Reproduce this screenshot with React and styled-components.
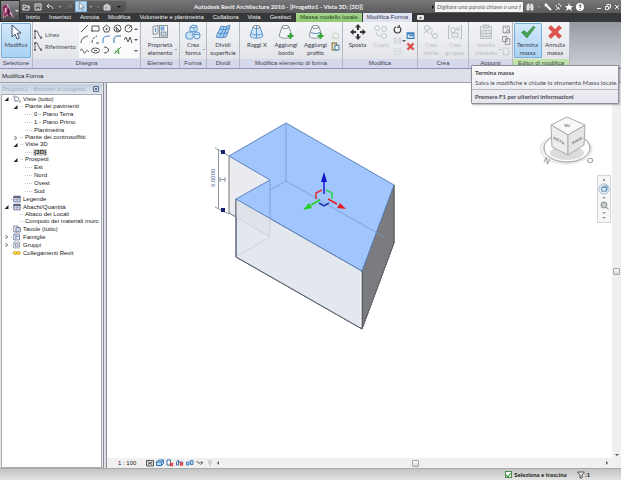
import React from "react";
import styled, { createGlobalStyle, css } from "styled-components";

const GlobalStyle = createGlobalStyle`
  * { box-sizing: border-box; }
  body {
    margin: 0;
    font-family: "Liberation Sans", Arial, sans-serif;
    font-size: 6px;
    line-height: 8px;
    color: #222;
  }
  button, input { font: inherit; color: inherit; margin: 0; padding: 0; border: 0; background: none; }
  svg { display: block; flex: none; }
`;

const Window = styled.div`
  display: flex;
  flex-direction: column;
  min-height: 100vh;
  background: #dcdfe8;
`;

/* ---------- header ---------- */
const Header = styled.header`
  display: flex;
  background: linear-gradient(#77777a, #5b5b5e 13px, #353638 13px, #38393c);
`;
const AppButton = styled.button`
  flex: none;
  display: flex;
  align-items: center;
  width: 20px;
  height: 22px;
  padding: 1px;
  gap: 1px;
  background: linear-gradient(#8d8d90, #444447);
  border: 1px solid #2c2c2e;
`;
const HeaderRows = styled.div`
  flex: 1;
  min-width: 0;
`;
const TitleBar = styled.div`
  display: flex;
  align-items: center;
  height: 13px;
`;
const QuickAccess = styled.div`
  display: flex;
  align-items: center;
  height: 11px;
  width: 106px;
  background: linear-gradient(#606063, #4a4a4d);
  border-radius: 0 0 6px 0;
`;
const QuickButton = styled.button`
  flex: none;
  display: flex;
  align-items: center;
  justify-content: center;
  width: ${(p) => (p.$narrow ? 7 : 12)}px;
  height: 11px;
  ${(p) =>
    p.$active &&
    css`
      background: #b9dcf7;
      border: 1px solid #7fb4de;
    `}
`;
const WindowTitle = styled.h1`
  flex: 1;
  margin: 0;
  font-family: Lato, sans-serif;
  font-size: 6px;
  font-weight: 700;
  color: #f2f2f2;
  text-align: center;
  white-space: nowrap;
`;
const SearchBox = styled.input`
  width: 88px;
  height: 10px;
  padding: 0 2px;
  background: #f4f4f4;
  font-family: Lato, sans-serif;
  font-style: italic;
  &::placeholder { color: #666; opacity: 1; }
`;
const TitleTools = styled.div`
  display: flex;
  align-items: center;
  justify-content: space-between;
  width: ${(p) => p.$width}px;
  margin: 0 1px 0 ${(p) => p.$gap}px;
`;
const Tabs = styled.nav`
  display: flex;
  align-items: stretch;
  gap: 1px;
  height: 9px;
  padding-left: 2px;
`;
const Tab = styled.button`
  padding: 0 4px;
  line-height: 9px;
  white-space: nowrap;
  color: #f0f0f0;
  ${(p) =>
    p.$tone === "green" &&
    css`
      background: linear-gradient(#a6d58d, #8fc876);
      color: #1d3a15;
    `}
  ${(p) =>
    p.$tone === "active" &&
    css`
      background: #dfe2f0;
      color: #333a55;
    `}
`;

/* ---------- ribbon ---------- */
const Ribbon = styled.section`
  display: flex;
  height: 47px;
  background: linear-gradient(#9698a2, #cdd0d9);
  border-bottom: 1px solid #8f92b5;
`;
const Group = styled.div`
  flex: 0 0 ${(p) => p.$width}px;
  min-width: 0;
  display: flex;
  flex-direction: column;
  background: linear-gradient(#f3f4f6, #dfe1e6);
  border-right: 1px solid #b6b9c4;
`;
const GroupBody = styled.div`
  flex: 1;
  display: flex;
  justify-content: center;
  gap: ${(p) => p.$gap || 0}px;
  padding: 1px 0;
`;
const GroupLabel = styled.div`
  height: 9px;
  text-align: center;
  white-space: nowrap;
  color: #3e4250;
  background: ${(p) => (p.$green ? "#bfe3a9" : "#d6d9ec")};
`;
const BigButton = styled.button`
  position: relative;
  flex: none;
  display: flex;
  flex-direction: column;
  align-items: center;
  gap: 1px;
  width: ${(p) => p.$width || 30}px;
  height: 35px;
  white-space: nowrap;
  color: #3c404a;
  border: 1px solid transparent;
  ${(p) =>
    p.$active &&
    css`
      background: linear-gradient(#d3e8fa, #a9d2f3);
      border-color: #78aeda;
      border-radius: 1px;
    `}
  &:disabled { color: #b4b6bb; opacity: 0.8; }
`;
const ButtonText = styled.span`
  line-height: 8px;
  font-family: Lato, sans-serif;
`;
const Drop = styled.i`
  position: absolute;
  right: 0;
  bottom: 7px;
  border: 1px solid transparent;
  border-top-color: #555;
  border-bottom: 0;
`;
const Stack = styled.div`
  display: flex;
  flex-direction: column;
  justify-content: center;
  gap: 2px;
`;
const LineButton = styled.button`
  display: flex;
  align-items: center;
  gap: 2px;
  height: 10px;
  white-space: nowrap;
  font-family: Lato, sans-serif;
  color: #4a4e57;
`;
const Gallery = styled.div`
  display: grid;
  grid-template-columns: repeat(5, 11px) 5px;
  grid-template-rows: repeat(3, 11px);
  place-items: center;
  background: #fbfbfc;
`;

/* ---------- options bar and body ---------- */
const OptionsBar = styled.div`
  height: 14px;
  padding: 3px 2px;
  border-bottom: 1px solid #9fa1a8;
`;
const Body = styled.main`
  flex: 1;
  display: flex;
  min-height: 0;
`;
const Browser = styled.aside`
  flex: 0 0 104px;
  display: flex;
  flex-direction: column;
  padding: 1px 1px 0 1px;
  border-right: 1px solid #8c8e93;
  background: #e4e5e9;
`;
const BrowserTitle = styled.div`
  display: flex;
  justify-content: space-between;
  align-items: center;
  height: 10px;
  padding: 0 3px 0 1px;
  color: #a3b0c2;
  background: linear-gradient(#c3cfdf, #dfe6ef);
`;
const Tree = styled.ul`
  flex: 1;
  margin: 0;
  padding: 0;
  list-style: none;
  background: #fff;
  border: 1px solid #a8acb3;
`;
const TreeRow = styled.li`
  display: flex;
  align-items: center;
  height: ${(p) => (p.$level === 1 ? 7 : 8)}px;
  padding-left: ${(p) => [2, 11, 23][p.$level]}px;
  gap: 1px;
  white-space: nowrap;
`;
const Toggle = styled.button`
  width: 6px;
  height: 6px;
`;
const Twig = styled.span`
  width: ${(p) => p.$width}px;
  border-top: 1px dotted #c4c4c4;
`;
const TreeLabel = styled.span`
  padding: 0 1px;
  line-height: 7px;
  color: #222;
  background: ${(p) => (p.$selected ? "#d4d4d4" : "none")};
  font-weight: ${(p) => (p.$selected ? 700 : 400)};
`;

const View = styled.section`
  flex: 1;
  min-width: 0;
  display: flex;
  flex-direction: column;
  margin-left: 2px;
  border-left: 1px solid #8c8e93;
`;
const ViewMain = styled.div`
  flex: 1;
  display: flex;
`;
const Canvas = styled.div`
  flex: 1;
  position: relative;
  overflow: hidden;
  background: #fff;
`;
const Placed = styled.div`
  position: absolute;
  ${(p) => (p.$right === undefined ? `left: ${p.$left}px;` : `right: ${p.$right}px;`)}
  top: ${(p) => p.$top}px;
`;
const NavBar = styled.div`
  display: flex;
  flex-direction: column;
  align-items: center;
  justify-content: space-between;
  width: 14px;
  height: 48px;
  padding: 2px 0;
  background: #f7f7f7;
  border: 1px solid #d5d5d5;
`;
const VScroll = styled.div`
  width: 9px;
  display: flex;
  flex-direction: column;
  align-items: center;
  justify-content: space-between;
  padding: 3px 0 1px;
  background: #f0f0f1;
`;
const Thumb = styled.div`
  width: 7px;
  height: 7px;
  background: linear-gradient(#fafafa, #d5d5d8);
  border: 1px solid #a5a5aa;
  border-radius: 1px;
`;
const ViewBar = styled.div`
  display: flex;
  align-items: center;
  height: 10px;
  padding: 0 12px 0 11px;
  background: #f0f0f1;
`;
const ViewIcons = styled.div`
  display: flex;
  align-items: center;
  gap: 2px;
  width: 80px;
`;
const HScroll = styled.div`
  flex: 1;
  display: flex;
  align-items: center;
  justify-content: space-between;
`;
const Scale = styled.span`
  width: 28px;
`;
const StatusBar = styled.footer`
  display: flex;
  align-items: center;
  justify-content: flex-end;
  gap: 10px;
  height: 12px;
  padding-right: 31px;
  background: linear-gradient(#c4c4c5, #e2e2e2);
  border-top: 1px solid #a9a9ab;
`;
const Check = styled.label`
  display: flex;
  align-items: center;
  gap: 2px;
  font-family: Lato, sans-serif;
  font-weight: 700;
`;
const CheckInput = styled.input`
  appearance: none;
  width: 7px;
  height: 7px;
  border: 1px solid #4d8a4d;
  background: #fff;
  display: grid;
  place-items: center;
  &:checked::before {
    content: "";
    width: 2px;
    height: 4px;
    border: solid #2f9a2f;
    border-width: 0 1px 1px 0;
    transform: rotate(40deg);
  }
`;
const FilterCount = styled.span`
  display: flex;
  align-items: center;
  font-weight: 700;
`;

const Tooltip = styled.div`
  position: absolute;
  top: 65px;
  right: 2px;
  width: 148px;
  font-family: Lato, sans-serif;
  color: #4a4a4f;
  background: linear-gradient(#f8f8fa, #e6e7ef);
  border: 1px solid #8f9096;
  border-radius: 1px;
  box-shadow: 1px 1px 2px rgba(0, 0, 0, 0.3);
  white-space: nowrap;
`;
const TooltipPart = styled.div`
  padding: 3px 3px 2px;
  & + & { border-top: 1px solid #b9bac2; }
`;
const TooltipTitle = styled.strong`
  display: block;
  margin-bottom: 2px;
`;

/* ---------- icons ---------- */
function Svg({ w = 16, h, box, color = "#444", sw = 1, children }) {
  return (
    <svg
      width={w}
      height={h || w}
      viewBox={box || "0 0 16 16"}
      fill="none"
      stroke={color}
      strokeWidth={sw}
      aria-hidden="true"
    >
      {children}
    </svg>
  );
}

const Arrow = ({ dir = "down", color = "#555" }) => (
  <Svg w={4} box="0 0 4 4" color="none">
    <path
      fill={color}
      d={{ down: "M0 1h4l-2 2z", up: "M0 3h4l-2-2z", left: "M3 0v4l-2-2z", right: "M1 0v4l2-2z" }[dir]}
    />
  </Svg>
);

const cursorPath = "M4 1v12l3-3 2 5 2.4-1-2.2-4.8H13z";

const CursorIcon = ({ w = 12 }) => (
  <Svg w={w} color="#3d4d63">
    <path d={cursorPath} fill="#fff" />
  </Svg>
);

const ElementIcon = () => (
  <Svg color="#8a929c">
    <path d="M1 2.500l5-1v8l-5 1z" fill="#e8eef5" />
    <path d="M3.500 4v4" stroke="#5a8fc7" />
    <rect x="7.500" y="1.500" width="8" height="12" fill="#fff" />
    <rect x="9" y="3" width="3" height="3" fill="#9bbfe4" stroke="#6f9cce" />
    <rect x="9" y="8" width="5" height="4" fill="#c5d3e0" />
    <path d="M1 13.500h6" stroke="#9aa" />
  </Svg>
);

const FormIcon = () => (
  <Svg color="#5b96cc">
    <path d="M5 3l3-2 4 1v5l-3 1-4-1z" fill="#d7eafa" />
    <path d="M5 3l4 1 3-2M9 4v4" />
    <rect x="1" y="8" width="7" height="7" rx="2" fill="#c9e2f7" />
    <rect x="9" y="8" width="6" height="7" rx="3" fill="#dcedfb" />
    <path d="M9 10.500h6" />
  </Svg>
);

const SurfaceIcon = () => (
  <Svg color="#3f7fc0" sw=".8">
    <path d="M6 2c3 1 5 1 9-1-1 5-2 8-4 12-4 1-7 1-10 0 2-4 3-7 5-11z" fill="#a9d0f2" />
    <path d="M9 2.500C8 6 6 10 4 13.500M12 2.400C11 6 9 10 8 13.500M5 5c3 1 6 1 9-1M3 9c3 1 6 1 9.500-.5" />
  </Svg>
);

const MassIcon = ({ plus, xray, profile }) => (
  <Svg color="#7b8793">
    <path d="M4 3l-3 9c2 3 11 3 13 0l-3-9z" fill={xray ? "#cfe4f8" : "#f2f4f6"} stroke={xray ? "#5b96cc" : "#8b959f"} />
    <ellipse cx="7.500" cy="3" rx="3.500" ry="1.500" fill="#fff" />
    {xray && <path d="M7.500 1v13M2 9.500c3 2 8 2 11 0" stroke="#5b96cc" />}
    {profile && <path d="M2.500 8c3 2 7 2 10 0" stroke="#4f88c4" />}
    {plus && <path d="M12.500 9v6M9.500 12h6" stroke="#36a536" strokeWidth="2" />}
  </Svg>
);

const MoveIcon = () => (
  <Svg color="#333">
    <path d="M8 2v4M8 10v4M2 8h4M10 8h4" strokeWidth="2" />
    <path d="M8 0l3 3.500H5zM8 16l3-3.500H5zM0 8l3.500-3v6zM16 8l-3.500-3v6z" fill="#333" stroke="none" />
  </Svg>
);

const CopyIcon = () => (
  <Svg color="#b8bdc2">
    <circle cx="4" cy="4" r="2.500" />
    <circle cx="11" cy="5" r="2.500" />
    <circle cx="11" cy="12" r="2.500" />
    <path d="M3 8c0 3 2 4 5 4" />
  </Svg>
);

const SimilarIcon = () => (
  <Svg color="#b0b5bb">
    <circle cx="4" cy="4" r="2.500" />
    <circle cx="12" cy="12" r="2.500" />
    <path d="M7 4c5 0 0 4 2 7M1 9l3-2 3 3" />
  </Svg>
);

const GroupIcon = () => (
  <Svg color="#b0b5bb">
    <path d="M3 1.500H1.500v13H3M13 1.500h1.500v13H13" />
    <circle cx="6" cy="6" r="2.500" />
    <circle cx="11" cy="5" r="1.500" />
    <rect x="5" y="9" width="6" height="4" />
  </Svg>
);

const PasteIcon = () => (
  <Svg color="#b0b5bb">
    <rect x="2.500" y="2.500" width="11" height="12" fill="#e4e6e9" />
    <rect x="5.500" y="1" width="5" height="3" fill="#ccc" />
    <path d="M4 6.500h8v6H4zM4 9.500h8M8 6v6" />
  </Svg>
);

const CheckIcon = () => (
  <Svg color="none">
    <path d="M1.500 8.500L4 6.500l3 2.500 6.500-7L15 3.500 7 14z" fill="#45a352" stroke="#2d7f3c" strokeWidth=".5" />
  </Svg>
);

const CrossIcon = ({ w = 16 }) => (
  <Svg w={w} color="none">
    <path d="M1.500 4L4 1.500 8 5.500l4-4L14.500 4l-4 4 4 4-2.500 2.500-4-4-4 4L1.500 12l4-4z" fill="#e0504d" stroke="#b93532" strokeWidth=".5" />
  </Svg>
);

const LineIcon = () => (
  <Svg w={9} box="0 0 9 9" color="#666">
    <path d="M1 8V1h2l3 6h2" />
    <path d="M0 1h2M0 8h2M7 7v2" stroke="#222" />
  </Svg>
);

const drawTools = [
  <path d="M1 8L8 1" />,
  <path d="M1 2h7v5H1zM0 7h2" />,
  <g><path d="M4.500 1l3.500 3-1.500 4h-4L1 4z" /><circle cx="4.500" cy="5" r=".7" /></g>,
  <g><circle cx="4.500" cy="4.500" r="3.500" /><path d="M3 3l4 4H4z" /></g>,
  <g><circle cx="4.500" cy="4.500" r="3.500" /><path d="M4.500 4.500l3-3" /></g>,
  <path d="M1 8c0-4 3-6 7-7" />,
  <path d="M1 8c0-4 2-6 5-7M5 8h3" strokeDasharray="3 1" />,
  <path d="M1 8V5c0-3 2-4 7-4" stroke="#3d7fc1" />,
  <path d="M1 8V4c0-2 2-3 3-3h4" stroke="#3d6ea5" />,
  <path d="M0 5l2-3 2 5 2-5 2 6" />,
  <path d="M0 5c2-6 4 4 5 2s2-4 4-1" />,
  <g><ellipse cx="4.500" cy="4.500" rx="4" ry="2.500" /><path d="M3 4.500h3" /></g>,
  <path d="M2 1c6 0 6 6 0 6" />,
  <g stroke="#46a046"><path d="M1 8l7-7M2 5l4 2M5 2l1 6" /></g>,
];

const clipboardPage = (
  <g strokeWidth="2">
    <path d="M2 2h8v12H2z" fill="#f1dfb4" stroke="#8b7a4e" />
    <path d="M7 6h7v8H7z" fill="#fff" stroke="#4f83bd" />
  </g>
);

const treeIcons = {
  views: <g><circle cx="5" cy="5" r="3" /><path d="M1 3V1h2M8 9h2V7M2 9l2-2" /></g>,
  legend: <g><path d="M1 1h9v8H1z" fill="#dfe3ee" /><path d="M1 2.500h9" stroke="#3d4468" strokeWidth="2" /><path d="M1 6h9M5.500 3v6" stroke="#8b90aa" /></g>,
  sheet: <g><path d="M1 1h6v8H1z" fill="#fff" /><path d="M4 3h6v6H4z" fill="#c9d6ee" /></g>,
  family: <g><path d="M1 1h8v8H1z" fill="#eef2fb" /><path d="M4 2v6M4 4h4" stroke="#4466a5" /></g>,
  group: <g><path d="M1 1h8v8H1z" strokeDasharray="3 1" fill="#eef2fb" /><circle cx="5" cy="5" r="2" /></g>,
  link: <g stroke="#c79b16"><rect x="0.500" y="3" width="5" height="4" rx="2" fill="#f5d650" /><rect x="5" y="3" width="5" height="4" rx="2" fill="#f5d650" /></g>,
};

/* ---------- data ---------- */
const tabs = ["Inizio", "Inserisci", "Annota", "Modifica", "Volumetrie e planimetria", "Collabora", "Vista", "Gestisci"];

const tree = [
  { level: 0, text: "Viste (tutto)", icon: "views", open: true },
  { level: 1, text: "Piante dei pavimenti", open: true },
  { level: 2, text: "0 - Piano Terra" },
  { level: 2, text: "1 - Piano Primo" },
  { level: 2, text: "Planimetria" },
  { level: 1, text: "Piante dei controsoffitti", open: false },
  { level: 1, text: "Viste 3D", open: true },
  { level: 2, text: "{3D}", selected: true },
  { level: 1, text: "Prospetti", open: true },
  { level: 2, text: "Est" },
  { level: 2, text: "Nord" },
  { level: 2, text: "Ovest" },
  { level: 2, text: "Sud" },
  { level: 0, text: "Legende", icon: "legend" },
  { level: 0, text: "Abachi/Quantità", icon: "legend", open: true },
  { level: 1, text: "Abaco dei Locali" },
  { level: 1, text: "Computo dei materiali muro" },
  { level: 0, text: "Tavole (tutto)", icon: "sheet" },
  { level: 0, text: "Famiglie", icon: "family", open: false },
  { level: 0, text: "Gruppi", icon: "group", open: false },
  { level: 0, text: "Collegamenti Revit", icon: "link" },
];

/* ---------- parts ---------- */
function RibbonButton({ icon, lines, drop, ...rest }) {
  return (
    <BigButton {...rest}>
      {icon}
      <ButtonText>
        {lines[0]}
        <br />
        {lines[1]}
      </ButtonText>
      {drop && <Drop />}
    </BigButton>
  );
}

function RibbonGroup({ label, width, gap, green, children }) {
  return (
    <Group $width={width}>
      <GroupBody $gap={gap}>{children}</GroupBody>
      <GroupLabel $green={green}>{label}</GroupLabel>
    </Group>
  );
}

function TopHeader() {
  return (
    <Header>
      <AppButton aria-label="Menu applicazione">
        <Svg w={12} h={17} box="0 0 13 17" color="none">
          <path d="M1 3l5-3 3 7 4 9-6-4-6 4z" fill="#c9a9c0" />
          <path d="M1 3l4-2 2 9-5 5z" fill="#8c1d55" />
          <path d="M6 3l3 5-1 3 4 4-6-3z" fill="#5d1440" />
          <path d="M3 5l2-1v5l-2 2z" fill="#e3b9d0" />
        </Svg>
        <Arrow color="#ddd" />
      </AppButton>
      <HeaderRows>
        <TitleBar>
          <QuickAccess>
            <QuickButton aria-label="Apri">
              <Svg w={8} box="0 0 8 8" color="#ddd"><path d="M1 7V2h2l1 1h3v4zM1 7l2-3h5" /></Svg>
            </QuickButton>
            <QuickButton aria-label="Salva">
              <Svg w={8} box="0 0 8 8" color="#e4e4e4"><path d="M1 1h6v6H1zM2 3h4M3 6h2" /></Svg>
            </QuickButton>
            <QuickButton aria-label="Annulla">
              <Svg w={8} box="0 0 8 8" color="#e4e4e4"><path d="M7 6c0-3-3-3-6-3M3 1L1 3l2 2" /></Svg>
            </QuickButton>
            <QuickButton $narrow aria-label="Elenco annulla"><Arrow color="#999" /></QuickButton>
            <QuickButton aria-label="Ripeti">
              <Svg w={8} box="0 0 8 8" color="#77777a"><path d="M1 6c0-3 3-3 6-3M5 1l2 2-2 2" /></Svg>
            </QuickButton>
            <QuickButton $active aria-label="Seleziona"><CursorIcon w={9} /></QuickButton>
            <QuickButton $narrow aria-label="Elenco selezione"><Arrow color="#999" /></QuickButton>
            <QuickButton $narrow aria-label="Elenco ripeti"><Arrow color="#77777a" /></QuickButton>
            <QuickButton aria-label="Vista 3D">
              <Svg w={8} box="0 0 8 8" color="#ddd"><path d="M1 3l3-2 3 2v4H1zM1 3h4v4" fill="#aaa" /></Svg>
            </QuickButton>
            <QuickButton aria-label="Personalizza"><Arrow color="#111" /></QuickButton>
          </QuickAccess>
          <WindowTitle>Autodesk Revit Architecture 2010 - [Progetto1 - Vista 3D: {"{3D}"}]</WindowTitle>
          <Arrow dir="right" color="#111" />
          <SearchBox aria-label="Cerca" placeholder="Digitare una parola chiave o una frase" />
          <TitleTools $width={58} $gap={3}>
            <Svg w={8} box="0 0 8 8" color="#eee"><path d="M1 7V3l1-2h1v6zM5 7V1h1l1 2v4zM3 4h2" fill="#ccc" /></Svg>
            <Arrow color="#888" />
            <Svg w={8} box="0 0 8 8" color="#fff" sw={2}><path d="M1 1l6 6M1 3l2-2" /></Svg>
            <Svg w={8} box="0 0 8 8" color="#eee"><path d="M2 7l3-3M2 2c0 2 2 4 4 4M4 1c2 0 3 1 3 3" /></Svg>
            <Svg w={8} box="0 0 8 8" color="none"><path d="M4 0l1 3h3L6 5l1 3-3-2-3 2 1-3-2-2h3z" fill="#fff" /></Svg>
            <Svg w={8} box="0 0 8 8" color="none">
              <circle cx="4" cy="4" r="4" fill="#fff" />
              <path d="M3 3c0-2 2.500-1 2 0L4 4v1M4 6v1" stroke="#444" />
            </Svg>
          </TitleTools>
          <TitleTools $width={24} $gap={11}>
            <Svg w={6} box="0 0 6 6" color="#eee"><path d="M1 4.500h4" /></Svg>
            <Svg w={6} box="0 0 6 6" color="#eee"><path d="M.5 2.500h3v3h-3zM2 2V.5h3.500V4H4" /></Svg>
            <Svg w={6} box="0 0 6 6" color="#eee"><path d="M1 1l4 4M5 1L1 5" /></Svg>
          </TitleTools>
        </TitleBar>
        <Tabs>
          {tabs.map((t) => (
            <Tab key={t}>{t}</Tab>
          ))}
          <Tab $tone="green">Massa modello locale</Tab>
          <Tab $tone="active">Modifica Forma</Tab>
          <Tab aria-label="Riduci barra">
            <Svg w={7} h={5} box="0 0 7 5" color="none">
              <rect width="7" height="5" rx="1" fill="#e8e8e8" />
              <path d="M2 3.500h3L3.500 1.500z" fill="#444" />
            </Svg>
          </Tab>
        </Tabs>
      </HeaderRows>
    </Header>
  );
}

function RibbonBar() {
  return (
    <Ribbon>
      <RibbonGroup label="Selezione" width={33}>
        <RibbonButton $active icon={<CursorIcon w={16} />} lines={["Modifica", ""]} />
      </RibbonGroup>
      <RibbonGroup label="Disegna" width={108} gap={3}>
        <Stack>
          <LineButton><LineIcon />Linea</LineButton>
          <LineButton><LineIcon />Riferimento</LineButton>
        </Stack>
        <Gallery>
          {[0, 1, 2].map((row) => (
            <React.Fragment key={row}>
              {[0, 1, 2, 3, 4].map((col) => (
                <Svg key={col} w={9} box="0 0 9 9" color="#555">{drawTools[row * 5 + col]}</Svg>
              ))}
              <Arrow dir={row === 0 ? "up" : "down"} />
            </React.Fragment>
          ))}
        </Gallery>
      </RibbonGroup>
      <RibbonGroup label="Elemento" width={39}>
        <RibbonButton $width={36} icon={<ElementIcon />} lines={["Proprietà", "elemento"]} drop />
      </RibbonGroup>
      <RibbonGroup label="Forma" width={27}>
        <RibbonButton $width={25} icon={<FormIcon />} lines={["Crea", "forma"]} drop />
      </RibbonGroup>
      <RibbonGroup label="Dividi" width={33}>
        <RibbonButton icon={<SurfaceIcon />} lines={["Dividi", "superficie"]} />
      </RibbonGroup>
      <RibbonGroup label="Modifica elemento di forma" width={103}>
        <RibbonButton $width={29} icon={<MassIcon xray />} lines={["Raggi X", ""]} />
        <RibbonButton $width={29} icon={<MassIcon plus />} lines={["Aggiungi", "bordo"]} />
        <RibbonButton $width={30} icon={<MassIcon plus profile />} lines={["Aggiungi", "profilo"]} />
        <Stack>
          <Svg w={9} color="#a8bfa8"><path d="M3 6l5-4 5 4v7H3z" fill="#e9f0e9" /></Svg>
          <Svg w={9}>{clipboardPage}</Svg>
        </Stack>
      </RibbonGroup>
      <RibbonGroup label="Modifica" width={75}>
        <RibbonButton $width={24} icon={<MoveIcon />} lines={["Sposta", ""]} />
        <RibbonButton $width={23} disabled icon={<CopyIcon />} lines={["Copia", ""]} />
        <Stack>
          <Svg w={9} color="#333" sw={2}><path d="M11 3a6 6 0 1 1-6 0M11 0v4H7" /></Svg>
          <Svg w={9} color="#c5c9d0"><path d="M2 3h4v10H2zM10 3h4v10h-4z" fill="#dde0e6" /></Svg>
          <Svg w={9} color="#d0d4da"><path d="M2 3h12v10H2zM2 8h12" fill="#e0e3e8" /></Svg>
        </Stack>
        <Stack><Arrow /></Stack>
        <Stack>
          <Svg w={9} color="#3f7fc0" sw={2}><path d="M2 3h12v10H2zM2 5h12M6 8h8" fill="#d7e9f9" /></Svg>
          <CrossIcon w={9} />
        </Stack>
      </RibbonGroup>
      <RibbonGroup label="Crea" width={51}>
        <RibbonButton $width={24} disabled icon={<SimilarIcon />} lines={["Crea", "simile"]} />
        <RibbonButton $width={24} disabled icon={<GroupIcon />} lines={["Crea", "gruppo"]} />
      </RibbonGroup>
      <RibbonGroup label="Appunti" width={44}>
        <RibbonButton $width={32} disabled icon={<PasteIcon />} lines={["Incolla", "allineato"]} drop />
        <Stack>
          <Svg w={9} color="#555"><path d="M2 2h11v12H2zM5 5h5M6 14l4-6 4 6" /></Svg>
          <Svg w={9} color="#555"><path d="M1 1h8v9H1zM6 5h8v10H6z" fill="#eee" /></Svg>
          <Svg w={9} color="#b8bbc2"><path d="M2 2h10v12H2zM8 14l6-4" /></Svg>
        </Stack>
      </RibbonGroup>
      <RibbonGroup label="Editor di modifica" width={57} green>
        <RibbonButton $width={28} $active icon={<CheckIcon />} lines={["Termina", "massa"]} />
        <RibbonButton $width={27} icon={<CrossIcon />} lines={["Annulla", "massa"]} />
      </RibbonGroup>
    </Ribbon>
  );
}

function ProjectBrowser() {
  return (
    <Browser>
      <BrowserTitle>
        Progetto1 - Browser di progetto
        <Svg w={6} box="0 0 6 6" color="#5b6b8c"><path d="M.5.5h5v5h-5zM2 2l2 2M4 2L2 4" /></Svg>
      </BrowserTitle>
      <Tree>
        {tree.map((n) => (
          <TreeRow key={n.text} $level={n.level}>
            {n.level < 2 && (
              <Toggle aria-label={n.text} tabIndex={n.open === undefined ? -1 : 0}>
                {n.open !== undefined && (
                  <Svg w={6} box="0 0 6 6" color={n.open ? "none" : "#999"}>
                    <path d={n.open ? "M4.500 1v4h-4z" : "M2 1l2 2-2 2z"} fill={n.open ? "#222" : "#fff"} />
                  </Svg>
                )}
              </Toggle>
            )}
            {n.icon ? (
              <>
                <Twig $width={1} />
                <Svg w={8} box="0 0 11 10" color="#5b6380">{treeIcons[n.icon]}</Svg>
              </>
            ) : (
              <Twig $width={n.level === 1 ? 3 : 7} />
            )}
            <TreeLabel $selected={n.selected}>{n.text}</TreeLabel>
          </TreeRow>
        ))}
      </Tree>
    </Browser>
  );
}

function Model() {
  return (
    <Svg w={200} h={220} box="204 114 200 220" color="#44597a">
      <path d="M229 156l41 24-34 19v18l-7-4z" fill="#e9ebf0" stroke="none" />
      <path d="M236 199l126 72v58l-126-72z" fill="#e3e7ee" />
      <path d="M236 199l34 19v19l-34-20z" fill="#dfe2e8" stroke="none" />
      <path d="M270 237l-34 20M270 219v18M229 213l41 24" stroke="#cfd2d9" />
      <path d="M362 271l32-86v58l-32 86z" fill="#7b7c80" stroke="#444" />
      <path d="M286 123l108 62-32 86-126-72 34-19-41-24z" fill="#a1c5fd" stroke="#5e83bd" />
      <path d="M286 123v58l98 56M286 181l-16 9M270 180v39" stroke="#7799cc" strokeWidth=".8" />
      <path d="M229 156v57l7 4" stroke="#777" />
      <path d="M236 199v58l126 72 32-86v-58" stroke="#6a6d74" />
      <path d="M361 272v55" stroke="#fff" />

      <path d="M218.500 149v60M215 148l14 8M215 207l14 7M220 179.500h5M220 177v5M225 177v5" stroke="#8f96a4" />
      <path d="M221 150h4v4h-4zM221 208h4v4h-4z" fill="#12206e" stroke="none" />
      <text x="215" y="187" transform="rotate(-90 215 187)" fontSize="6" fill="#4d6291" stroke="none">6.0000</text>

      <path d="M316 199v-6l6-3" stroke="#e03030" strokeWidth="1.500" />
      <path d="M326 190l6 3v6" stroke="#30d050" strokeWidth="1.500" />
      <path d="M319 203l5 3 5-3" stroke="#1a2fb0" strokeWidth="1.500" />
      <path d="M324 194v-13" stroke="#1a1ad0" strokeWidth="1.500" />
      <path d="M324 172l3 10h-6z" fill="#1414c8" stroke="none" />
      <path d="M320 200l-9 5" stroke="#22d022" strokeWidth="1.500" />
      <path d="M303 210l6-7 3 5z" fill="#22d022" stroke="none" />
      <path d="M328 199l9 5" stroke="#e02020" strokeWidth="1.500" />
      <path d="M346 209l-9-1 3-5z" fill="#e02020" stroke="none" />
    </Svg>
  );
}

function ViewCube() {
  return (
    <Svg w={60} h={52} box="536 114 60 52" color="#aaa">
      <ellipse cx="566" cy="149" rx="26" ry="15" fill="#efefef" stroke="#e4e4e4" />
      <ellipse cx="567" cy="148" rx="23" ry="14" fill="#fff" stroke="#999" />
      <ellipse cx="567" cy="153" rx="17" ry="7" fill="#dcdcdc" stroke="none" />
      <path d="M551 125l16-8 18 8-17 10z" fill="#f8f8f8" />
      <path d="M551 125l17 10v20l-16-8z" fill="#ededed" />
      <path d="M568 135l17-10-1 20-16 10z" fill="#e6e6e6" />
      <g stroke="none" fill="#777" fontSize="4" fontWeight="700" textAnchor="middle">
        <text x="567" y="127">SU</text>
        <text transform="matrix(1 .55 0 1 559 142)">RETR</text>
        <text transform="matrix(1 -.55 0 1 577 142)">SINIS</text>
        <text transform="rotate(25 546 160)" x="547" y="163" fontSize="8" fontWeight="400">N</text>
        <text x="590" y="163" fontSize="8" fontWeight="400">O</text>
      </g>
    </Svg>
  );
}

function DrawingView() {
  return (
    <View>
      <ViewMain>
        <Canvas>
          <Placed $left={97} $top={31}><Model /></Placed>
          <Placed $right={16} $top={31}><ViewCube /></Placed>
          <Placed $right={1} $top={92}>
            <NavBar>
              <Svg w={4} box="0 0 4 4" color="#999"><path d="M1 1l2 2M3 1L1 3" /></Svg>
              <Svg w={12} color="#9fb2c6">
                <circle cx="8" cy="8" r="7" fill="#e3ecf5" />
                <path d="M5 6h6v5H5zM5 6l2-2h5v5l-1 2" stroke="#4477aa" />
              </Svg>
              <Arrow color="#999" />
              <Svg w={9} color="#98a39a" sw={2}><circle cx="7" cy="7" r="5" fill="#ccc" /><path d="M10 10l5 5" /></Svg>
              <Arrow color="#999" />
              <Arrow color="#999" />
            </NavBar>
          </Placed>
        </Canvas>
        <VScroll><Arrow dir="up" /><Thumb /><Arrow /></VScroll>
      </ViewMain>
      <ViewBar>
        <Scale>1 : 100</Scale>
        <ViewIcons>
          <Svg w={8} color="#555" sw={2}><path d="M1 3h14v11H1zM4 6l8 5M12 6l-8 5" fill="#ddd" /></Svg>
          <Svg w={8} color="#2f72b5" sw={2}><path d="M1 6l4-4h10v7l-4 4H1zM1 6h10v7M11 6l4-4" fill="#bcdcf5" /></Svg>
          <Svg w={8} color="#3f6fa5" sw={2}><path d="M2 2h7v10H2z" fill="#fff" /><path d="M8 8l6 6M14 8l-6 6" stroke="#d33" strokeWidth="3" /></Svg>
          <Svg w={8} color="#3f6fa5" sw={2}><path d="M1 12V6l4-4v10zM5 6h8" /><path d="M8 7l6 6M14 7l-6 6" stroke="#d33" strokeWidth="3" /></Svg>
          <Svg w={8} color="#3f7fc0" sw={2}><path d="M1 12V6h5v6zM9 3h5v8H9z" fill="#bcdcf5" /></Svg>
          <Svg w={8} color="#555" sw={2}><path d="M1 4l5 5 3-3 5 1-5 4" /></Svg>
          <Svg w={8} color="#bbb" sw={2}><circle cx="8" cy="6" r="3" /><path d="M8 9v5" /></Svg>
          <Arrow dir="left" />
        </ViewIcons>
        <HScroll><i /><Thumb /><Arrow dir="right" /></HScroll>
      </ViewBar>
    </View>
  );
}

function App() {
  return (
    <Window>
      <GlobalStyle />
      <TopHeader />
      <RibbonBar />
      <OptionsBar>Modifica Forma</OptionsBar>
      <Body>
        <ProjectBrowser />
        <DrawingView />
      </Body>
      <StatusBar>
        <Check>
          <CheckInput type="checkbox" defaultChecked />
          Seleziona e trascina
        </Check>
        <FilterCount>
          <Svg w={8} color="#555" sw={2}><path d="M1 2h14l-5 6v6H6V8z" fill="#eee" /></Svg>:1
        </FilterCount>
      </StatusBar>
      <Tooltip role="tooltip">
        <TooltipPart>
          <TooltipTitle>Termina massa</TooltipTitle>
          Salva le modifiche e chiude lo strumento Massa locale.
        </TooltipPart>
        <TooltipPart>
          <strong>Premere F1 per ulteriori informazioni</strong>
        </TooltipPart>
      </Tooltip>
    </Window>
  );
}

export default App;
